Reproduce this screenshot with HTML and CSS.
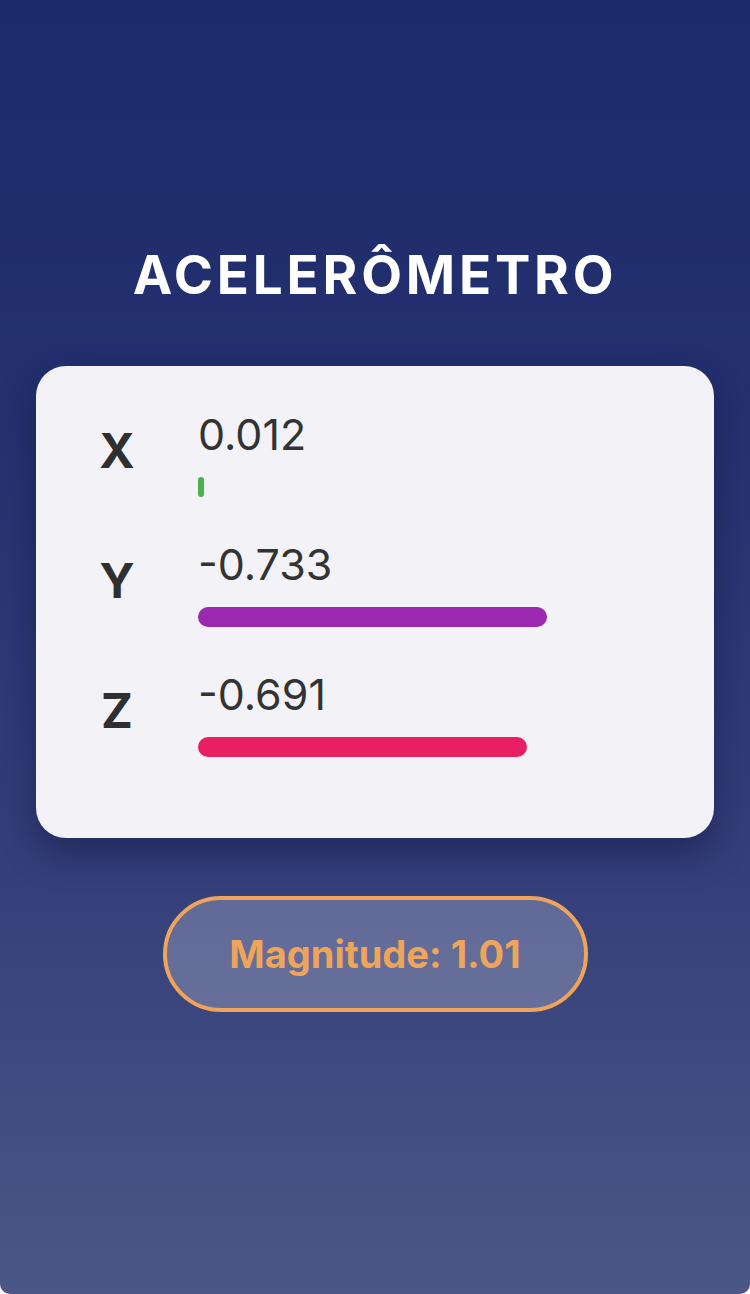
FILE: index.html
```html
<!DOCTYPE html>
<html lang="pt">
<head>
<meta charset="utf-8">
<title>Acelerômetro</title>
<link rel="stylesheet" href="styles.css">
</head>
<body>
<main class="screen">
  <h1 class="title">ACELERÔMETRO</h1>
  <section class="card">
    <div class="row">
      <div class="axis">X</div>
      <div class="reading">
        <div class="value">0.012</div>
        <div class="track"><div class="bar bar-x" style="width: 1.2%"></div></div>
      </div>
    </div>
    <div class="row">
      <div class="axis">Y</div>
      <div class="reading">
        <div class="value">-0.733</div>
        <div class="track"><div class="bar bar-y" style="width: 73.3%"></div></div>
      </div>
    </div>
    <div class="row">
      <div class="axis">Z</div>
      <div class="reading">
        <div class="value">-0.691</div>
        <div class="track"><div class="bar bar-z" style="width: 69.1%"></div></div>
      </div>
    </div>
  </section>
  <div class="magnitude">Magnitude: 1.01</div>
</main>
</body>
</html>
```

FILE: styles.css
```css
* { box-sizing: border-box; }

html, body {
  margin: 0;
  padding: 0;
  background: #ffffff;
}

body {
  font-family: Inter, "Noto Sans", "Liberation Sans", sans-serif;
}

.screen {
  width: 750px;
  height: 1294px;
  background: linear-gradient(180deg, #1c2a6c 0%, #24306f 30%, #353f7a 68%, #4b5787 100%);
  border-radius: 0 0 10px 10px;
  display: flex;
  flex-direction: column;
  align-items: center;
  padding-top: 243px;
  overflow: hidden;
}

.title {
  margin: 0;
  color: #ffffff;
  font-size: 53px;
  line-height: 64px;
  font-weight: 700;
  letter-spacing: 3.8px;
  text-align: center;
}

.card {
  margin-top: 59px;
  width: 678px;
  height: 472px;
  background: #f2f2f7;
  border-radius: 30px;
  padding: 38px 40px 0 40px;
  box-shadow: 0 16px 36px rgba(10, 15, 50, 0.42);
  display: flex;
  flex-direction: column;
  gap: 37px;
}

.row {
  display: flex;
  align-items: center;
  gap: 40px;
}

.axis {
  width: 82px;
  flex: none;
  text-align: center;
  color: #2f2f2f;
  font-size: 48px;
  line-height: 56px;
  font-weight: 700;
}

.reading {
  flex: 1;
  display: flex;
  flex-direction: column;
}

.value {
  color: #333333;
  font-size: 43px;
  line-height: 60px;
  font-weight: 400;
  margin-bottom: 13px;
}

.track {
  width: 100%;
  height: 20px;
}

.bar {
  height: 20px;
  border-radius: 10px;
  min-width: 6px;
}

.bar-x { background: #4caf50; }
.bar-y { background: #9c27b0; }
.bar-z { background: #e91e63; }

.magnitude {
  margin-top: 58px;
  width: 425px;
  height: 116px;
  border: 4px solid #eea45a;
  border-radius: 58px;
  background: rgba(255, 255, 255, 0.22);
  color: #eea45a;
  font-size: 38px;
  font-weight: 700;
  display: flex;
  align-items: center;
  justify-content: center;
}
```
